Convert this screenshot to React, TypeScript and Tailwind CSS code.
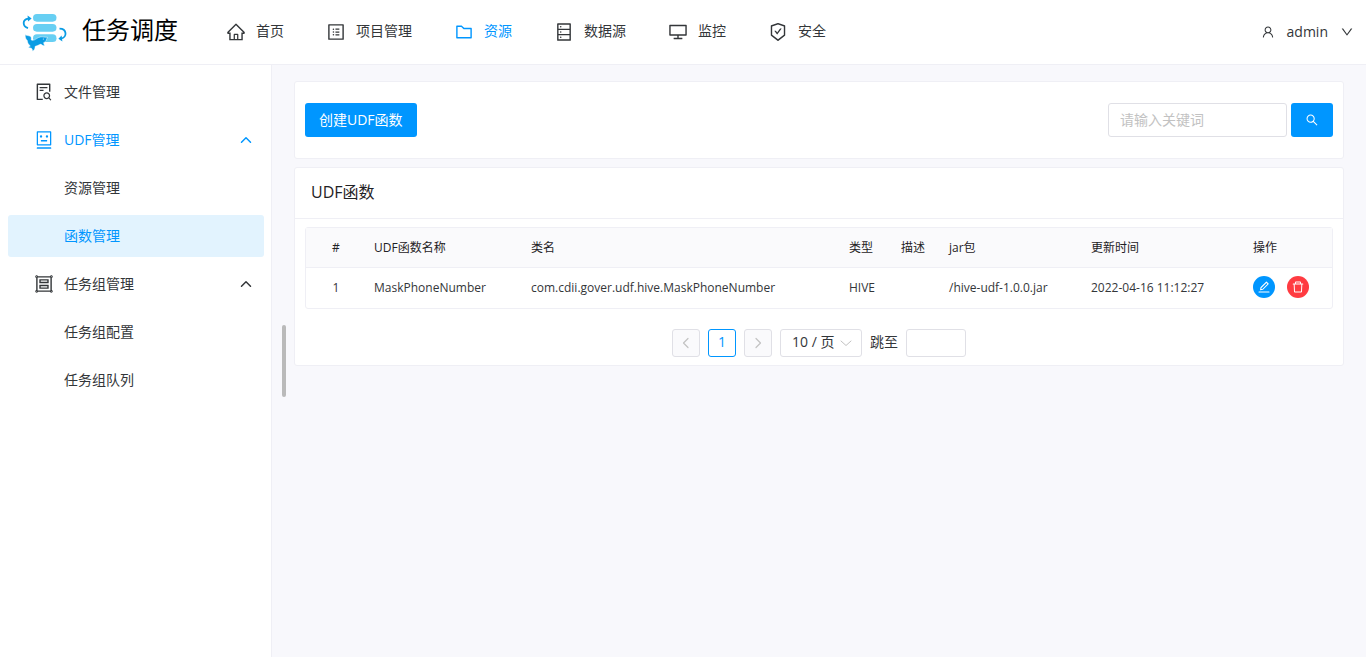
import { useState } from 'react';
import type { ReactNode } from 'react';
import {
  AiOutlineDatabase,
  AiOutlineDelete,
  AiOutlineDesktop,
  AiOutlineDown,
  AiOutlineEdit,
  AiOutlineFileSearch,
  AiOutlineFolder,
  AiOutlineGroup,
  AiOutlineHome,
  AiOutlineProfile,
  AiOutlineRobot,
  AiOutlineSafetyCertificate,
  AiOutlineSearch,
  AiOutlineUser,
} from 'react-icons/ai';

interface UdfFunction {
  id: number;
  name: string;
  className: string;
  type: string;
  description: string;
  jar: string;
  updateTime: string;
}

interface SideItem {
  label: string;
  icon?: ReactNode;
  active?: boolean;
  selected?: boolean;
  expanded?: boolean;
}

const navItems = [
  { label: '首页', icon: <AiOutlineHome /> },
  { label: '项目管理', icon: <AiOutlineProfile /> },
  { label: '资源', icon: <AiOutlineFolder />, active: true },
  { label: '数据源', icon: <AiOutlineDatabase /> },
  { label: '监控', icon: <AiOutlineDesktop /> },
  { label: '安全', icon: <AiOutlineSafetyCertificate /> },
];

const sideItems: SideItem[] = [
  { label: '文件管理', icon: <AiOutlineFileSearch /> },
  { label: 'UDF管理', icon: <AiOutlineRobot />, active: true, expanded: true },
  { label: '资源管理' },
  { label: '函数管理', active: true, selected: true },
  { label: '任务组管理', icon: <AiOutlineGroup />, expanded: true },
  { label: '任务组配置' },
  { label: '任务组队列' },
];

const functions: UdfFunction[] = [
  {
    id: 1,
    name: 'MaskPhoneNumber',
    className: 'com.cdii.gover.udf.hive.MaskPhoneNumber',
    type: 'HIVE',
    description: '',
    jar: '/hive-udf-1.0.0.jar',
    updateTime: '2022-04-16 11:12:27',
  },
];

export default function App() {
  return (
    <div className="flex min-h-screen flex-col bg-[#f8f8fc] font-['Open_Sans','Noto_Sans_CJK_SC',sans-serif] text-sm text-[#333639]">
      <Header />
      <div className="flex flex-1">
        <Sidebar />
        <main className="relative min-w-0 flex-1 px-[22px] py-4">
          {/* 滚动条 */}
          <div className="absolute top-1/2 left-2.5 h-[72px] w-1 -translate-y-1/2 rounded-full bg-[#bababa]" />
          <SearchCard />
          <FunctionCard />
        </main>
      </div>
    </div>
  );
}

function Header() {
  return (
    <header className="flex h-[65px] items-center border-b border-[#efeff5] bg-white pr-3 pl-5">
      <Logo />
      <h1 className="ml-3 pb-1 text-2xl whitespace-nowrap text-black">任务调度</h1>
      <nav className="ml-[46px] flex gap-10">
        {navItems.map((item) => (
          <a
            key={item.label}
            href="#"
            className={`flex items-center gap-2 whitespace-nowrap ${item.active ? 'text-[#0096ff]' : ''}`}
          >
            <span className="flex w-6 justify-center text-xl">{item.icon}</span>
            <span className="pb-0.5">{item.label}</span>
          </a>
        ))}
      </nav>
      <button type="button" className="ml-auto flex items-center gap-3">
        <AiOutlineUser className="text-sm" />
        admin
        <AiOutlineDown className="text-sm" />
      </button>
    </header>
  );
}

function Logo() {
  return (
    <svg className="h-11 w-[50px] shrink-0" viewBox="0 0 50 44" fill="none" aria-hidden="true">
      <g fill="#67cff3">
        <rect x="13" y="4" width="23.500" height="7.700" rx="3.850" />
        <rect x="13" y="14" width="23.500" height="7.700" rx="3.850" />
        <rect x="13" y="24.300" width="23.500" height="7.700" rx="3.850" />
      </g>
      <g stroke="#0a9ce4" strokeWidth="1.800">
        <path d="M8 18.200C2.500 16.500 1.800 9.500 8.500 8.600" />
        <path d="M39.500 18.600C47 18.600 47.500 27.500 41 28.600" />
      </g>
      <g fill="#0a9ce4">
        <path d="M7.600 5.600L11.600 8.500L8 11.600Z" />
        <path d="M41.600 25.400L38.400 28.700L42.400 31.600Z" />
        <path
          stroke="#fff"
          strokeWidth="0.500"
          d="M5.300 24.600C6.500 25.800 8.500 25.400 10.300 26.300C11.500 27 11.300 28.600 11.300 30C13.500 30.800 15 29.600 16.600 28.600C18.800 27.100 21.500 26.300 24 27.100C25.200 27.300 26.500 27 27.600 27.300C27.300 28.300 26.500 28.800 26.400 29.900C26.200 31.300 24.800 32 23.600 32.700L24.600 36C22.500 35.600 21.600 34.900 20.900 34.100C18.500 35.300 16.500 35.800 15 36.500C15.300 38.500 14.400 40 12.600 41.300C12.400 39.900 12.300 39 11.400 38.200L8.300 37.500C9 36.700 9.600 36.300 10.300 36C8.500 34.600 7.400 32.800 7.300 30.600C5.600 29.200 5 27 5.300 24.600Z"
        />
      </g>
      <circle cx="23.300" cy="29.100" r="0.500" fill="#fff" />
    </svg>
  );
}

// 细箭头图标
function Chevron({ d, className, strokeWidth = 1.2 }: { d: string; className: string; strokeWidth?: number }) {
  return (
    <svg
      className={className}
      viewBox="0 0 12 12"
      fill="none"
      stroke="currentColor"
      strokeWidth={strokeWidth}
      strokeLinecap="round"
      strokeLinejoin="round"
      aria-hidden="true"
    >
      <path d={d} />
    </svg>
  );
}

function Sidebar() {
  return (
    <aside className="w-[272px] shrink-0 border-r border-[#efeff5] bg-white">
      <ul className="flex flex-col gap-1.5 py-1.5 pr-[7px] pl-2">
        {sideItems.map((item) => (
          <li key={item.label}>
            <a
              href="#"
              className={`flex h-[42px] items-center gap-2 rounded-[3px] pr-3 pl-6 ${
                item.active ? 'text-[#0096ff]' : ''
              } ${item.selected ? 'bg-[#e2f3fe]' : ''}`}
            >
              <span className="flex w-6 justify-center text-xl">{item.icon}</span>
              {item.label}
              {item.expanded && (
                <Chevron d="M1.500 8.200L6 3.800L10.500 8.200" strokeWidth={1.5} className="ml-auto size-3" />
              )}
            </a>
          </li>
        ))}
      </ul>
    </aside>
  );
}

function SearchCard() {
  const [keyword, setKeyword] = useState('');

  return (
    <section className="flex items-center justify-between rounded-[3px] border border-[#efeff5] bg-white px-2.5 py-[21px]">
      <button type="button" className="h-[34px] rounded-[3px] bg-[#0096ff] px-3.5 text-white">
        创建UDF函数
      </button>
      <form className="flex gap-1" onSubmit={(e) => e.preventDefault()}>
        <input
          type="text"
          aria-label="关键词"
          placeholder="请输入关键词"
          value={keyword}
          onChange={(e) => setKeyword(e.target.value)}
          className="h-[34px] w-[179px] rounded-[3px] border border-[#e0e0e6] px-[11px] pb-0.5 outline-none placeholder:text-[#c2c2c2]"
        />
        <button
          type="submit"
          aria-label="搜索"
          className="flex h-[34px] w-[42px] items-center justify-center rounded-[3px] bg-[#0096ff] text-white"
        >
          <AiOutlineSearch className="text-sm" />
        </button>
      </form>
    </section>
  );
}

function FunctionCard() {
  return (
    <section className="mt-2 rounded-[3px] border border-[#efeff5] bg-white">
      <h2 className="flex h-[51px] items-center border-b border-[#efeff5] px-4 pb-0.5 text-base text-[#1f2225]">
        UDF函数
      </h2>
      <div className="px-2.5 py-2">
        <div className="rounded-[3px] border border-[#efeff5]">
          <table className="w-full table-fixed border-separate border-spacing-0 text-left text-xs">
            <colgroup>
              <col className="w-[60px]" />
              <col className="w-[157px]" />
              <col />
              <col className="w-[52px]" />
              <col className="w-12" />
              <col className="w-[142px]" />
              <col className="w-[162px]" />
              <col className="w-[87px]" />
            </colgroup>
            <thead className="bg-[#fafafc] text-[#1f2225]">
              <tr className="h-10 *:border-b *:border-[#efeff5]">
                <th className="px-2 text-center font-normal">#</th>
                <th className="px-2 font-normal">UDF函数名称</th>
                <th className="px-2 font-normal">类名</th>
                <th className="px-2 font-normal">类型</th>
                <th className="px-2 font-normal">描述</th>
                <th className="px-2 font-normal">jar包</th>
                <th className="px-2 font-normal">更新时间</th>
                <th className="px-2 font-normal">操作</th>
              </tr>
            </thead>
            <tbody>
              {functions.map((fn) => (
                <tr key={fn.id} className="h-10 whitespace-nowrap">
                  <td className="px-2 text-center">{fn.id}</td>
                  <td className="px-2">{fn.name}</td>
                  <td className="px-2">{fn.className}</td>
                  <td className="px-2">{fn.type}</td>
                  <td className="px-2">{fn.description}</td>
                  <td className="px-2">{fn.jar}</td>
                  <td className="px-2">{fn.updateTime}</td>
                  <td className="px-2 pb-0.5">
                    <div className="flex gap-3">
                      <button
                        type="button"
                        aria-label="编辑"
                        className="flex size-[22px] items-center justify-center rounded-full bg-[#0096ff] text-sm text-white"
                      >
                        <AiOutlineEdit />
                      </button>
                      <button
                        type="button"
                        aria-label="删除"
                        className="flex size-[22px] items-center justify-center rounded-full bg-[#ff3b41] text-sm text-white"
                      >
                        <AiOutlineDelete />
                      </button>
                    </div>
                  </td>
                </tr>
              ))}
            </tbody>
          </table>
        </div>
        <Pagination />
      </div>
    </section>
  );
}

function Pagination() {
  return (
    <div className="mt-5 flex items-center justify-center gap-2">
      <button
        type="button"
        aria-label="上一页"
        disabled
        className="flex size-7 items-center justify-center rounded-[3px] border border-[#e0e0e6] bg-[#fafafc] text-[#c2c2c2]"
      >
        <Chevron d="M8 1.500L3.500 6L8 10.500" className="size-3" />
      </button>
      <button
        type="button"
        className="flex size-7 items-center justify-center rounded-[3px] border border-[#0096ff] pb-0.5 text-[#0096ff]"
      >
        1
      </button>
      <button
        type="button"
        aria-label="下一页"
        disabled
        className="flex size-7 items-center justify-center rounded-[3px] border border-[#e0e0e6] bg-[#fafafc] text-[#c2c2c2]"
      >
        <Chevron d="M4 1.500L8.500 6L4 10.500" className="size-3" />
      </button>
      <div className="relative">
        <select
          aria-label="每页条数"
          className="block h-7 w-[82px] appearance-none rounded-[3px] border border-[#e0e0e6] bg-white pb-0.5 pl-[11px] outline-none"
        >
          <option>10 / 页</option>
          <option>30 / 页</option>
          <option>50 / 页</option>
        </select>
        <Chevron
          d="M1 4L6 8.500L11 4"
          strokeWidth={1}
          className="pointer-events-none absolute top-2 right-2.5 size-3 text-[#c2c2c2]"
        />
      </div>
      <label htmlFor="jump" className="pb-0.5">
        跳至
      </label>
      <input
        id="jump"
        type="text"
        className="h-7 w-[60px] rounded-[3px] border border-[#e0e0e6] px-2 outline-none"
      />
    </div>
  );
}
